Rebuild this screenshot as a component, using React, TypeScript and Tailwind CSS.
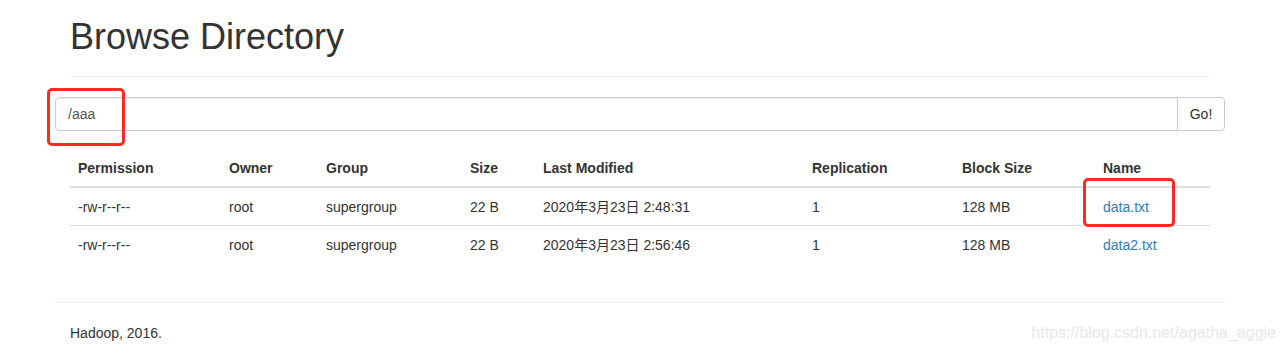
import React from "react";

const font = { fontFamily: '"Liberation Sans", Arial, "Noto Sans CJK SC", sans-serif' };

type Entry = {
  permission: string;
  owner: string;
  group: string;
  size: string;
  modified: string;
  replication: string;
  blockSize: string;
  name: string;
};

const entries: Entry[] = [
  {
    permission: "-rw-r--r--",
    owner: "root",
    group: "supergroup",
    size: "22 B",
    modified: "2020年3月23日 2:48:31",
    replication: "1",
    blockSize: "128 MB",
    name: "data.txt",
  },
  {
    permission: "-rw-r--r--",
    owner: "root",
    group: "supergroup",
    size: "22 B",
    modified: "2020年3月23日 2:56:46",
    replication: "1",
    blockSize: "128 MB",
    name: "data2.txt",
  },
];

const headers = [
  "Permission",
  "Owner",
  "Group",
  "Size",
  "Last Modified",
  "Replication",
  "Block Size",
  "Name",
];

export default function App() {
  return (
    <div className="relative h-[353px] w-[1286px] overflow-hidden bg-white text-sm text-[#333]" style={font}>
      <div className="ml-[55px] w-[1170px]">
        <div className="px-[15px]">
          <h1 className="border-b border-[#eee] pt-[17px] pb-[19px] text-[36px] font-medium leading-[40px] text-[#333]">
            Browse Directory
          </h1>
        </div>

        <div className="mt-[20px] flex h-[34px]">
          <input
            readOnly
            value="/aaa"
            className="h-full flex-1 rounded-l-[4px] border border-[#ccc] px-[12px] text-sm text-[#555] shadow-[inset_0_1px_1px_rgba(0,0,0,0.075)] outline-none"
            style={font}
          />
          <button className="-ml-px h-full w-[48px] rounded-r-[4px] border border-[#ccc] bg-white text-sm text-[#333]">
            Go!
          </button>
        </div>

        <div className="mt-[19px] px-[15px]">
          <table className="w-full border-collapse text-left">
            <colgroup>
              <col className="w-[151px]" />
              <col className="w-[97px]" />
              <col className="w-[144px]" />
              <col className="w-[73px]" />
              <col className="w-[269px]" />
              <col className="w-[150px]" />
              <col className="w-[141px]" />
              <col />
            </colgroup>
            <thead>
              <tr>
                {headers.map((h) => (
                  <th key={h} className="border-b-2 border-[#ddd] p-[8px] font-bold leading-[20px]">
                    {h}
                  </th>
                ))}
              </tr>
            </thead>
            <tbody>
              {entries.map((e, i) => (
                <tr key={e.name} className={i > 0 ? "border-t border-[#ddd]" : ""}>
                  <td className="p-[8px] pt-[9px] leading-[20px]">{e.permission}</td>
                  <td className="p-[8px] pt-[9px] leading-[20px]">{e.owner}</td>
                  <td className="p-[8px] pt-[9px] leading-[20px]">{e.group}</td>
                  <td className="p-[8px] pt-[9px] leading-[20px]">{e.size}</td>
                  <td className="p-[8px] pt-[9px] leading-[20px]">{e.modified}</td>
                  <td className="p-[8px] pt-[9px] leading-[20px]">{e.replication}</td>
                  <td className="p-[8px] pt-[9px] leading-[20px]">{e.blockSize}</td>
                  <td className="p-[8px] pt-[9px] leading-[20px]">
                    <a href="#" className="text-[#337ab7]">
                      {e.name}
                    </a>
                  </td>
                </tr>
              ))}
            </tbody>
          </table>
        </div>

        <div className="mt-[39px] border-t border-[#eee] px-[15px] pt-[20px] leading-[20px]">
          Hadoop, 2016.
        </div>
      </div>

      {/* watermark */}
      <div className="absolute right-[10px] top-[322px] text-[16px] leading-[22px] text-[#e8e8e8]">
        https://blog.csdn.net/agatha_aggie
      </div>

      {/* red annotation boxes */}
      <div className="absolute left-[47px] top-[88px] h-[58px] w-[78px] rounded-[5px] border-[3px] border-[#ff2a1f]" />
      <div className="absolute left-[1083px] top-[178px] h-[49px] w-[92px] rounded-[5px] border-[3px] border-[#ff2a1f]" />
    </div>
  );
}
